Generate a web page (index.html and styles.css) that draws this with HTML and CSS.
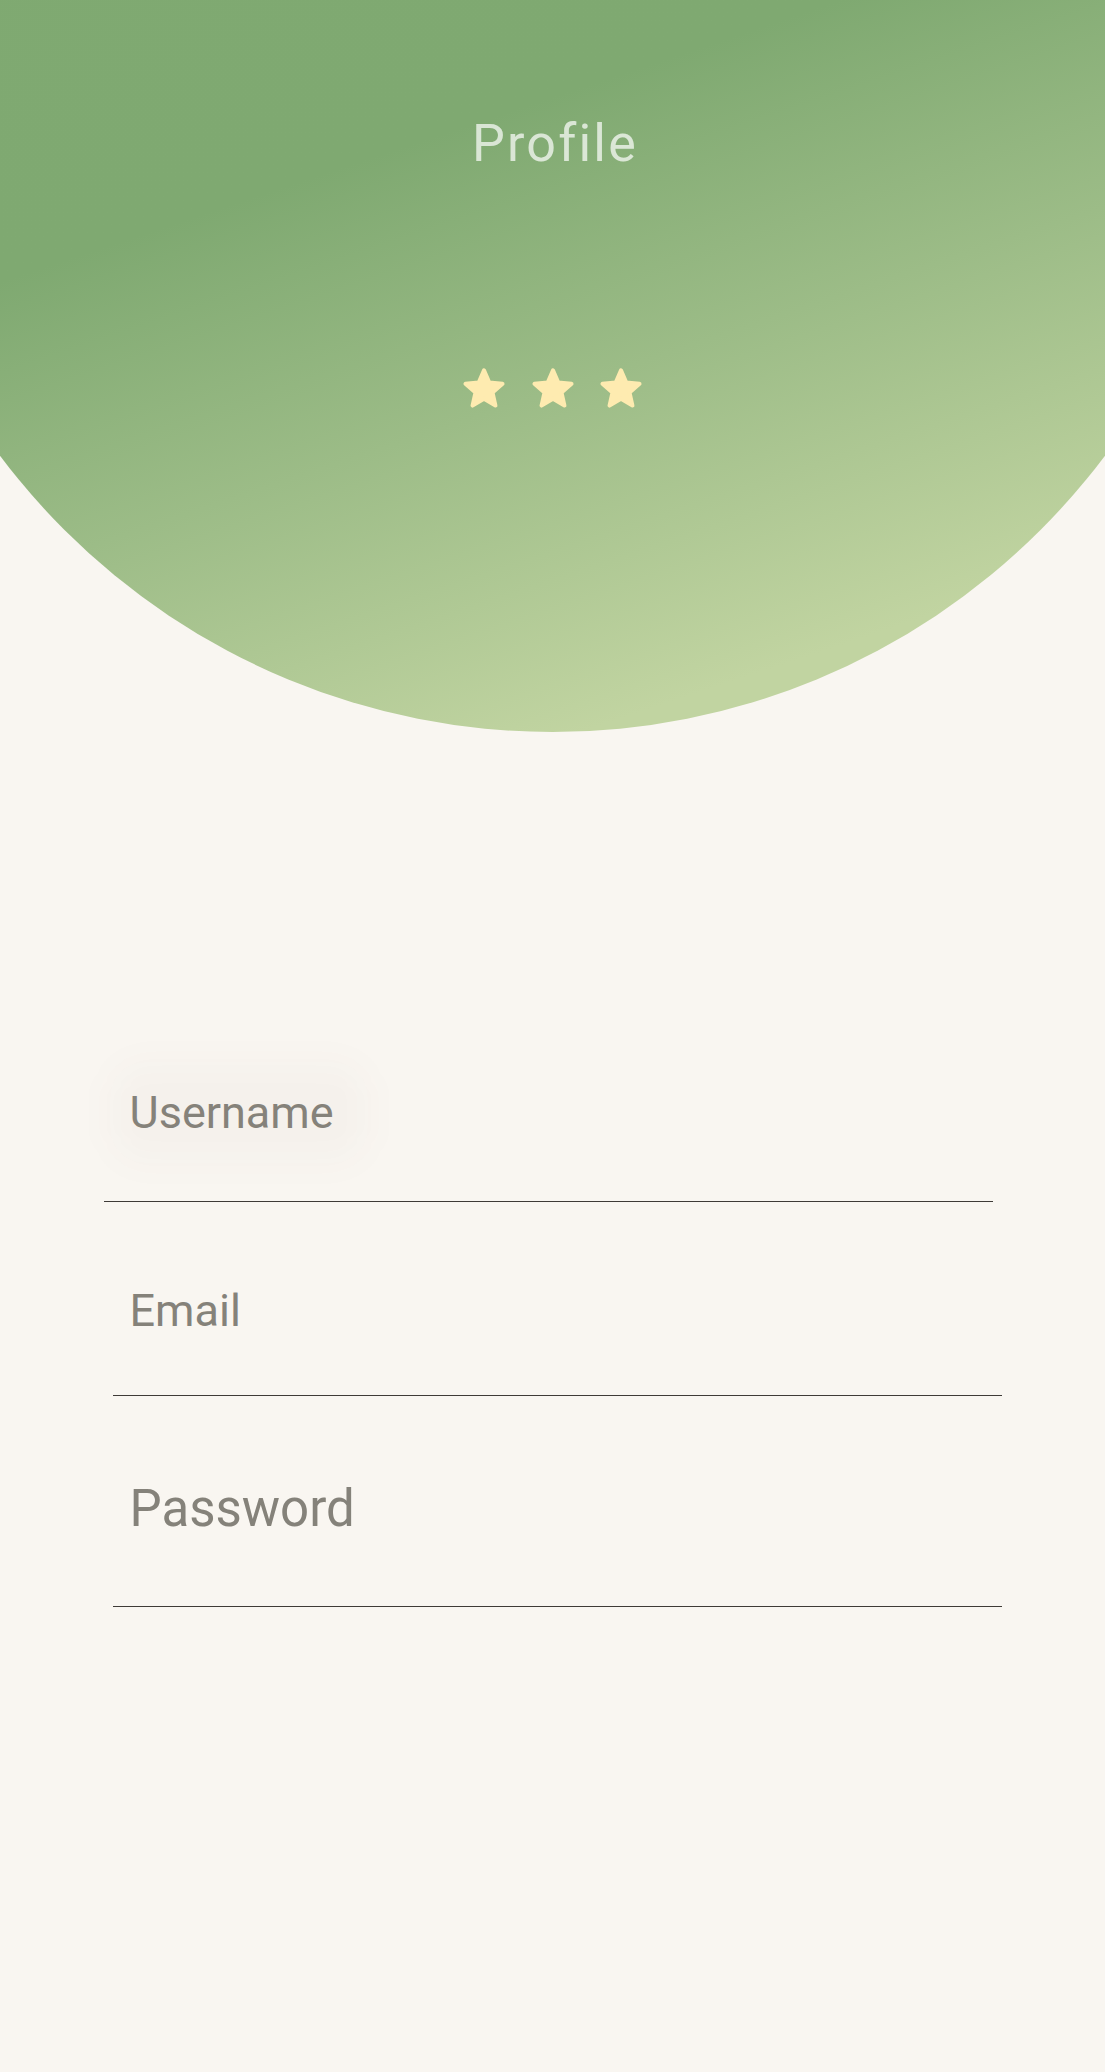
FILE: index.html
```html
<!DOCTYPE html>
<html lang="en">
<head>
<meta charset="utf-8">
<title>Profile</title>
<link rel="stylesheet" href="styles.css">
</head>
<body>
<header class="hero">
  <h1 class="hero-title">Profile</h1>
  <div class="stars">
    <svg class="star" viewBox="0 0 42 40" aria-hidden="true"><polygon points="21,2.3 26.29,14.52 39.55,15.77 29.56,24.58 32.46,37.58 21,30.8 9.54,37.58 12.44,24.58 2.45,15.77 15.71,14.52"/></svg>
    <svg class="star" viewBox="0 0 42 40" aria-hidden="true"><polygon points="21,2.3 26.29,14.52 39.55,15.77 29.56,24.58 32.46,37.58 21,30.8 9.54,37.58 12.44,24.58 2.45,15.77 15.71,14.52"/></svg>
    <svg class="star" viewBox="0 0 42 40" aria-hidden="true"><polygon points="21,2.3 26.29,14.52 39.55,15.77 29.56,24.58 32.46,37.58 21,30.8 9.54,37.58 12.44,24.58 2.45,15.77 15.71,14.52"/></svg>
  </div>
</header>
<main class="form">
  <div class="field field-username">
    <span class="label label-md label-glow">Username</span>
  </div>
  <div class="field field-email">
    <span class="label label-md">Email</span>
  </div>
  <div class="field field-password">
    <span class="label label-lg">Password</span>
  </div>
</main>
</body>
</html>
```

FILE: styles.css
```css
html, body {
  margin: 0;
  padding: 0;
}

body {
  background: #f9f6f1;
  font-family: Roboto, "Liberation Sans", Arial, sans-serif;
  width: 1105px;
  min-height: 2072px;
  overflow: hidden;
}

.hero {
  position: relative;
  height: 732px;
  padding-top: 118px;
  box-sizing: border-box;
  display: flex;
  flex-direction: column;
  align-items: center;
  overflow: hidden;
}

.hero::before {
  content: "";
  position: absolute;
  left: -138px;
  top: -649px;
  width: 1381px;
  height: 1381px;
  border-radius: 50%;
  background: linear-gradient(161.5deg, #80aa72 0%, #7fa971 53%, #9cbc87 69%, #c1d4a1 88%);
  z-index: 0;
}

.hero-title {
  position: relative;
  z-index: 1;
  margin: 0;
  padding-left: 5px;
  font-size: 52px;
  line-height: 1;
  font-weight: 400;
  letter-spacing: 2.2px;
  color: rgba(255, 255, 255, 0.7);
}

.stars {
  position: relative;
  z-index: 1;
  display: flex;
  gap: 26.5px;
  margin-top: 198px;
}

.star {
  width: 42px;
  height: 40px;
  display: block;
  overflow: visible;
}

.star polygon {
  fill: #feebb0;
  stroke: #feebb0;
  stroke-width: 4;
  stroke-linejoin: round;
}

.form {
  display: flex;
  flex-direction: column;
  gap: 86px;
  padding: 358px 0 0 104px;
}

.field {
  width: 889px;
  box-sizing: border-box;
  border-bottom: 1px solid #3f3b37;
  display: flex;
}

.field-username {
  padding: 0 0 66px 25.5px;
}

.field-email {
  margin-left: 9px;
  padding: 0 0 62px 16.5px;
}

.field-password {
  margin-left: 9px;
  padding: 1px 0 72px 16.5px;
}

.label {
  color: #85827a;
  line-height: 1;
  font-weight: 400;
}

.label-md {
  font-size: 45px;
}

.label-lg {
  font-size: 51px;
}

.label-glow {
  position: relative;
}

.label-glow::before {
  content: "";
  position: absolute;
  top: -28px;
  right: -34px;
  bottom: -28px;
  left: -20px;
  border-radius: 34px;
  background: rgba(70, 55, 30, 0.025);
  filter: blur(16px);
  z-index: -1;
}
```
